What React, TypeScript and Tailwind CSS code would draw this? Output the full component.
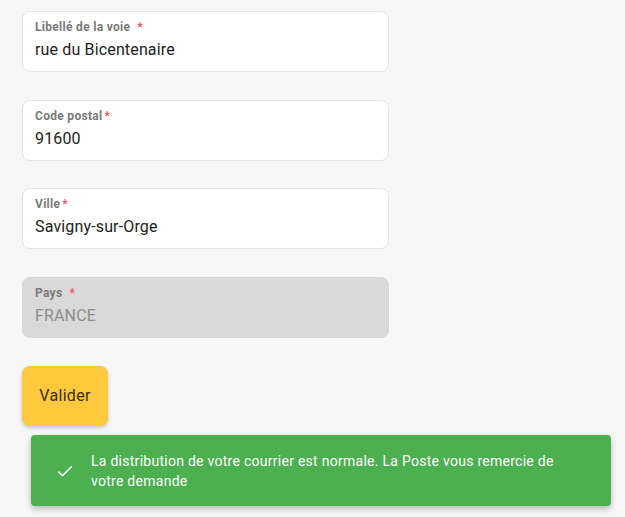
import React from 'react';

interface FieldProps {
  label: string;
  value: string;
  wideStar?: boolean;
  disabled?: boolean;
}

function Field({ label, value, wideStar, disabled }: FieldProps) {
  return (
    <div
      className={
        'h-[61px] w-[367px] rounded-lg border px-3 pt-[7px] ' +
        (disabled ? 'border-[#d6d6d6] bg-[#d9d9d9]' : 'border-[#e4e4e4] bg-white')
      }
    >
      <div className="text-xs leading-4 font-bold tracking-[0.3px] text-[#7a7a7a]">
        {label}
        <span className={'text-[#e05a5a] ' + (wideStar ? 'ml-[7px]' : 'ml-[2px]')}>*</span>
      </div>
      <div
        className={
          'mt-[3px] text-base leading-6 tracking-[0.15px] ' +
          (disabled ? 'text-[#8c8c8c]' : 'text-[#222222]')
        }
      >
        {value}
      </div>
    </div>
  );
}

export default function App() {
  return (
    <div className="min-h-[517px] bg-[#f7f7f7] pl-[22px] pt-[11px] font-['Roboto',sans-serif]">
      <div className="flex flex-col gap-[27.7px]">
        <Field label="Libellé de la voie" value="rue du Bicentenaire" wideStar />
        <Field label="Code postal" value="91600" />
        <Field label="Ville" value="Savigny-sur-Orge" />
        <Field label="Pays" value="FRANCE" wideStar disabled />
      </div>

      <button className="mt-[28px] h-[60px] w-[86px] rounded-lg bg-[#ffc83d] text-base tracking-[0.3px] text-[#3b2f12] shadow-[0_2px_4px_rgba(0,0,0,0.2)]">
        Valider
      </button>

      <div className="ml-[9px] mt-[9px] flex h-[71px] w-[580px] items-center rounded bg-[#4caf50] px-6 text-white shadow-[0_3px_6px_rgba(0,0,0,0.25)]">
        <svg width="20" height="20" viewBox="0 0 24 24" fill="currentColor" className="shrink-0">
          <path d="M9 16.17L4.83 12l-1.42 1.41L9 19 21 7l-1.41-1.41z" />
        </svg>
        <p className="ml-4 text-sm leading-5 tracking-[0.27px]">
          La distribution de votre courrier est normale. La Poste vous remercie de
          <br />
          votre demande
        </p>
      </div>
    </div>
  );
}
